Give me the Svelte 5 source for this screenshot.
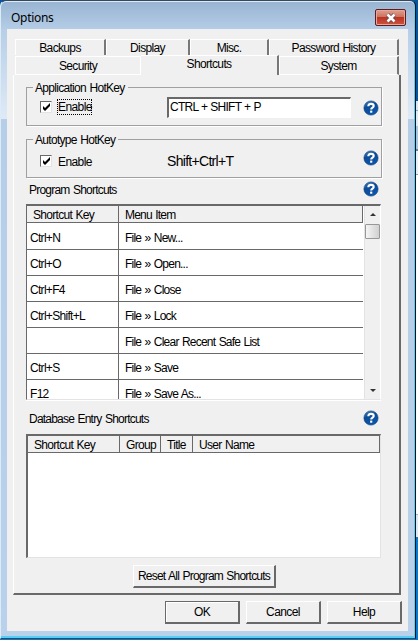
<script>
  const rows = [
    ['Ctrl+N', 'File » New...'],
    ['Ctrl+O', 'File » Open...'],
    ['Ctrl+F4', 'File » Close'],
    ['Ctrl+Shift+L', 'File » Lock'],
    ['', 'File » Clear Recent Safe List'],
    ['Ctrl+S', 'File » Save'],
    ['F12', 'File » Save As...'],
  ];
</script>

{#snippet help()}
  <svg class="help" width="16" height="16" viewBox="0 0 16 16">
    <defs>
      <linearGradient id="ball" x1="0" y1="0" x2="0.4" y2="1">
        <stop offset="0" stop-color="#4a8acb" />
        <stop offset="0.45" stop-color="#0d4c97" />
        <stop offset="1" stop-color="#0a55ac" />
      </linearGradient>
    </defs>
    <circle cx="8" cy="8" r="7.1" fill="url(#ball)" stroke="#0e3a70" stroke-width=".6" />
    <path d="M5.3 6.3C5.3 4.5 6.5 3.9 8 3.9s2.7.7 2.7 2.1c0 1.7-2.5 1.6-2.5 3.6" fill="none" stroke="#fff" stroke-width="2.1" />
    <rect x="7.1" y="10.6" width="2.2" height="2.1" fill="#fff" />
  </svg>
{/snippet}

{#snippet check()}
  <span class="box">
    <svg width="9" height="9" viewBox="0 0 9 9"><path d="M1 3v3l2 2 5-5V0L3 5z" fill="#000" /></svg>
  </span>
{/snippet}

<div class="desk">
  <div class="window">
    <header>
      <span class="title">Options</span>
      <button class="close" aria-label="Close">
        <svg width="12" height="10" viewBox="0 0 12 10">
          <path d="M2.5 1.5 9.5 8.5M9.5 1.5 2.5 8.5" stroke="#69474a" stroke-width="4" />
          <path d="M2.5 1.5 9.5 8.5M9.5 1.5 2.5 8.5" stroke="#fff" stroke-width="2.5" />
        </svg>
      </button>
    </header>
    <main>
      <nav>
        <div class="tabs back">
          <div class="tab" style:width="91px"><span>Backups</span></div>
          <div class="tab" style:width="84px"><span>Display</span></div>
          <div class="tab" style:width="79px"><span>Misc.</span></div>
          <div class="tab" style:width="130px"><span>Password History</span></div>
        </div>
        <div class="tabs front">
          <div class="tab plain" style:width="126px"><span>Security</span></div>
          <div class="tab active" style:width="138px"><span>Shortcuts</span></div>
          <div class="tab" style:width="120px"><span>System</span></div>
        </div>
      </nav>
      <section class="page">
        <fieldset class="app">
          <legend>Application HotKey</legend>
          {@render check()}
          <span class="focus">Enable</span>
          <div class="field"><span>CTRL + SHIFT + P</span></div>
          {@render help()}
        </fieldset>
        <fieldset class="auto">
          <legend>Autotype HotKey</legend>
          {@render check()}
          <span class="enable">Enable</span>
          <span class="combo">Shift+Ctrl+T</span>
          {@render help()}
        </fieldset>
        <div class="label first"><span>Program Shortcuts</span>{@render help()}</div>
        <div class="list">
          <div class="grid">
            <div class="row head"><div>Shortcut Key</div><div>Menu Item</div></div>
            {#each rows as [key, item]}
              <div class="row"><div>{key}</div><div>{item}</div></div>
            {/each}
          </div>
          <div class="scroll">
            <svg width="6" height="3" viewBox="0 0 6 3"><path d="M0 3 3 0 6 3z" fill="#333" /></svg>
            <i class="thumb"></i>
            <svg class="down" width="6" height="3" viewBox="0 0 6 3"><path d="M0 0h6L3 3z" fill="#333" /></svg>
          </div>
        </div>
        <div class="label second"><span>Database Entry Shortcuts</span>{@render help()}</div>
        <div class="entries">
          <div class="heads">
            <div style:width="92px">Shortcut Key</div>
            <div style:width="41px">Group</div>
            <div style:width="32px">Title</div>
            <div class="rest">User Name</div>
          </div>
        </div>
        <button class="btn reset"><span>Reset All Program Shortcuts</span></button>
      </section>
      <footer>
        <button class="btn ok"><span>OK</span></button>
        <button class="btn"><span>Cancel</span></button>
        <button class="btn"><span>Help</span></button>
      </footer>
    </main>
  </div>
</div>

<style>
  * { box-sizing: border-box; }
  .desk {
    width: 418px; height: 640px; overflow: hidden;
    font: 12px/14px "Liberation Sans", Arial, sans-serif; letter-spacing: -0.78px; word-spacing: 0.8px;
    color: #000; white-space: nowrap;
    background: linear-gradient(#07559f 0 101px, #d9e7f3 101px 110px, #8ba6bf 110px 111px, #dfeaf5 111px 126px, #a9c6e2 126px 149px, #6f8296 149px 151px, #e6eff7 151px 174px, #8ba0b4 174px 175px, #fff 175px 514px, #a7b4bf 514px 515px, #dce9f5 515px 537px, #3d6c97 537px 538px, #0878d1 538px);
  }
  .window {
    width: 416px; height: 639px; padding: 0 6px 5px;
    border: 1px solid #36495b; border-left-color: #dcebf5; border-right-color: #07131c; border-radius: 6px 6px 0 0;
    box-shadow: inset -1px -2px #54cff2, inset 0 1px #dce9f6;
    background:
      linear-gradient(#dfeaf600 25px, #dfeaf6) 0 0 / 6px 118px no-repeat,
      linear-gradient(#dfeaf600 25px, #dfeaf6) 100% 0 / 7px 118px no-repeat,
      linear-gradient(#98b4d2, #b5cde7 29px, #b9d1ea);
  }
  header { height: 28px; display: flex; justify-content: space-between; align-items: flex-start; }
  .title { font: 12px/16px "Noto Sans", sans-serif; letter-spacing: -0.3px; margin: 9px 0 0 4px; }
  .close {
    width: 31px; height: 17px; margin: 8px 3px 0 0; padding: 0;
    display: flex; align-items: center; justify-content: center;
    border: 1px solid #5b1d20; border-radius: 2px; box-shadow: inset 0 0 0 1px #e9a595;
    background: linear-gradient(#dda08f, #cf7161 45%, #b93522 50%, #cb5440);
  }
  main { width: 401px; height: 602px; background: #f0f0f0; padding: 9px 6px 0; }
  nav { padding-left: 2px; }
  .tabs { display: flex; align-items: flex-end; }
  .tab {
    display: flex; justify-content: center; border-top: 1px solid #fff; border-left: 1px solid #fff;
    border-right: 2px solid #777; padding-top: 2px; letter-spacing: -0.65px;
  }
  .back { height: 17px; }
  .back .tab { height: 16px; padding-top: 1px; }
  .front { height: 20px; }
  .front .tab { height: 19px; border-bottom: 1px solid #fff; }
  .front .plain { border-right: 1px solid #fff; }
  .front .active { height: 20px; padding-top: 1px; border-bottom: 0; border-left: 0; }
  .page {
    width: 388px; height: 520px; padding: 12px 19px 0 12px;
    border: solid; border-width: 0 2px 2px 1px; border-color: #fff #696969 #696969 #fff;
  }
  fieldset {
    position: relative; margin: 0; padding: 0; height: 39px; min-width: 0; width: 356px;
    border: 1px solid #a0a0a0; box-shadow: 1px 1px #fff;
    display: flex; align-items: flex-start;
  }
  legend { position: absolute; left: 6px; top: -7px; padding: 0 3px 0 2px; background: #f0f0f0; letter-spacing: -0.7px; }
  .auto { margin-top: 13px; }
  .box {
    width: 12px; height: 12px; margin: 13px 0 0 13px; background: #fff; flex: none;
    border: 1px solid; border-color: #696969 #e3e3e3 #e3e3e3 #696969;
    display: flex; align-items: center; justify-content: center;
  }
  .auto .box { margin-top: 15px; }
  .focus { margin: 11px 0 0 5px; width: 35px; height: 16px; line-height: 14px; border: 1px dotted #000; }
  .enable { margin: 15px 0 0 6px; width: 109px; }
  .focus, .enable { letter-spacing: -0.6px; }
  .field {
    margin: 9px 0 0 75px; width: 184px; height: 21px; background: #fff; padding: 1px 0 0 1px;
    border: 1px solid; border-top: 2px solid #696969; border-left: 2px solid #696969;
    border-right-color: #fff; border-bottom-color: #fff; letter-spacing: -0.75px; word-spacing: 0.5px;
  }
  .help { flex: none; margin-left: auto; }
  .combo { font-size: 14px; line-height: 16px; letter-spacing: -0.7px; margin-top: 13px; }
  fieldset .help { margin: 10px 2px 0 auto; }
  .app .help { margin-top: 12px; }
  .label { display: flex; align-items: center; height: 16px; width: 353px; padding-left: 3px; }
  .label span { padding-top: 1px; }
  .first { margin-top: 3px; }
  .second { margin-top: 10px; }
  .list {
    margin-top: 7px; width: 355px; height: 196px; overflow: hidden; display: flex; background: #fff;
    border: solid; border-width: 2px 1px 1px; border-color: #696969 #fff #e3e3e3 #696969; box-shadow: 0 1px #fff;
  }
  .grid { width: 336px; flex: none; }
  .row { display: flex; height: 26px; }
  .row div { padding: 7px 0 0 6px; border-bottom: 1px solid #696969; width: 244px; }
  .row div:first-child { width: 92px; padding-left: 3px; border-right: 1px solid #696969; letter-spacing: -0.7px; }
  .head { height: 17px; background: #f0f0f0; }
  .head div, .head div:first-child { padding: 2px 0 0 6px; border-right: 1px solid #696969; }
  .head + .row { height: 27px; }
  .head + .row div { padding-top: 8px; }
  .scroll { width: 16px; margin-left: 1px; background: #f0f0f0; display: flex; flex-direction: column; align-items: center; padding: 7px 0; border-left: 1px solid #e3e3e3; }
  .scroll svg { flex: none; }
  .thumb { flex: none; width: 15px; height: 15px; margin-top: 8px; border: 1px solid #979797; border-radius: 1px; background: linear-gradient(90deg, #f5f5f5, #d0d0d0); }
  .scroll .down { margin-top: auto; }
  .entries {
    margin-top: 8px; width: 355px; height: 124px; background: #fff;
    border: solid; border-width: 2px 1px 1px 2px; border-color: #696969 #e3e3e3 #e3e3e3 #696969;
  }
  .heads { display: flex; height: 17px; background: #f0f0f0; border-bottom: 1px solid #696969; letter-spacing: -0.7px; }
  .heads div { padding: 2px 0 0 6px; border-right: 1px solid #696969; }
  .rest { flex: 1; }
  .btn {
    display: block; font: inherit; letter-spacing: inherit; word-spacing: inherit; padding: 0; color: #000; background: #f0f0f0;
    border: solid; border-width: 1px 2px 2px 1px; border-color: #fff #696969 #696969 #fff; height: 23px; width: 75px;
  }
  .reset { width: 143px; margin: 7px 0 0 107px; }
  .ok { border-color: #696969; box-shadow: inset 1px 1px #fff; }
  footer { display: flex; gap: 6px; justify-content: flex-end; padding: 6px 0 0; letter-spacing: -0.6px; }
</style>
